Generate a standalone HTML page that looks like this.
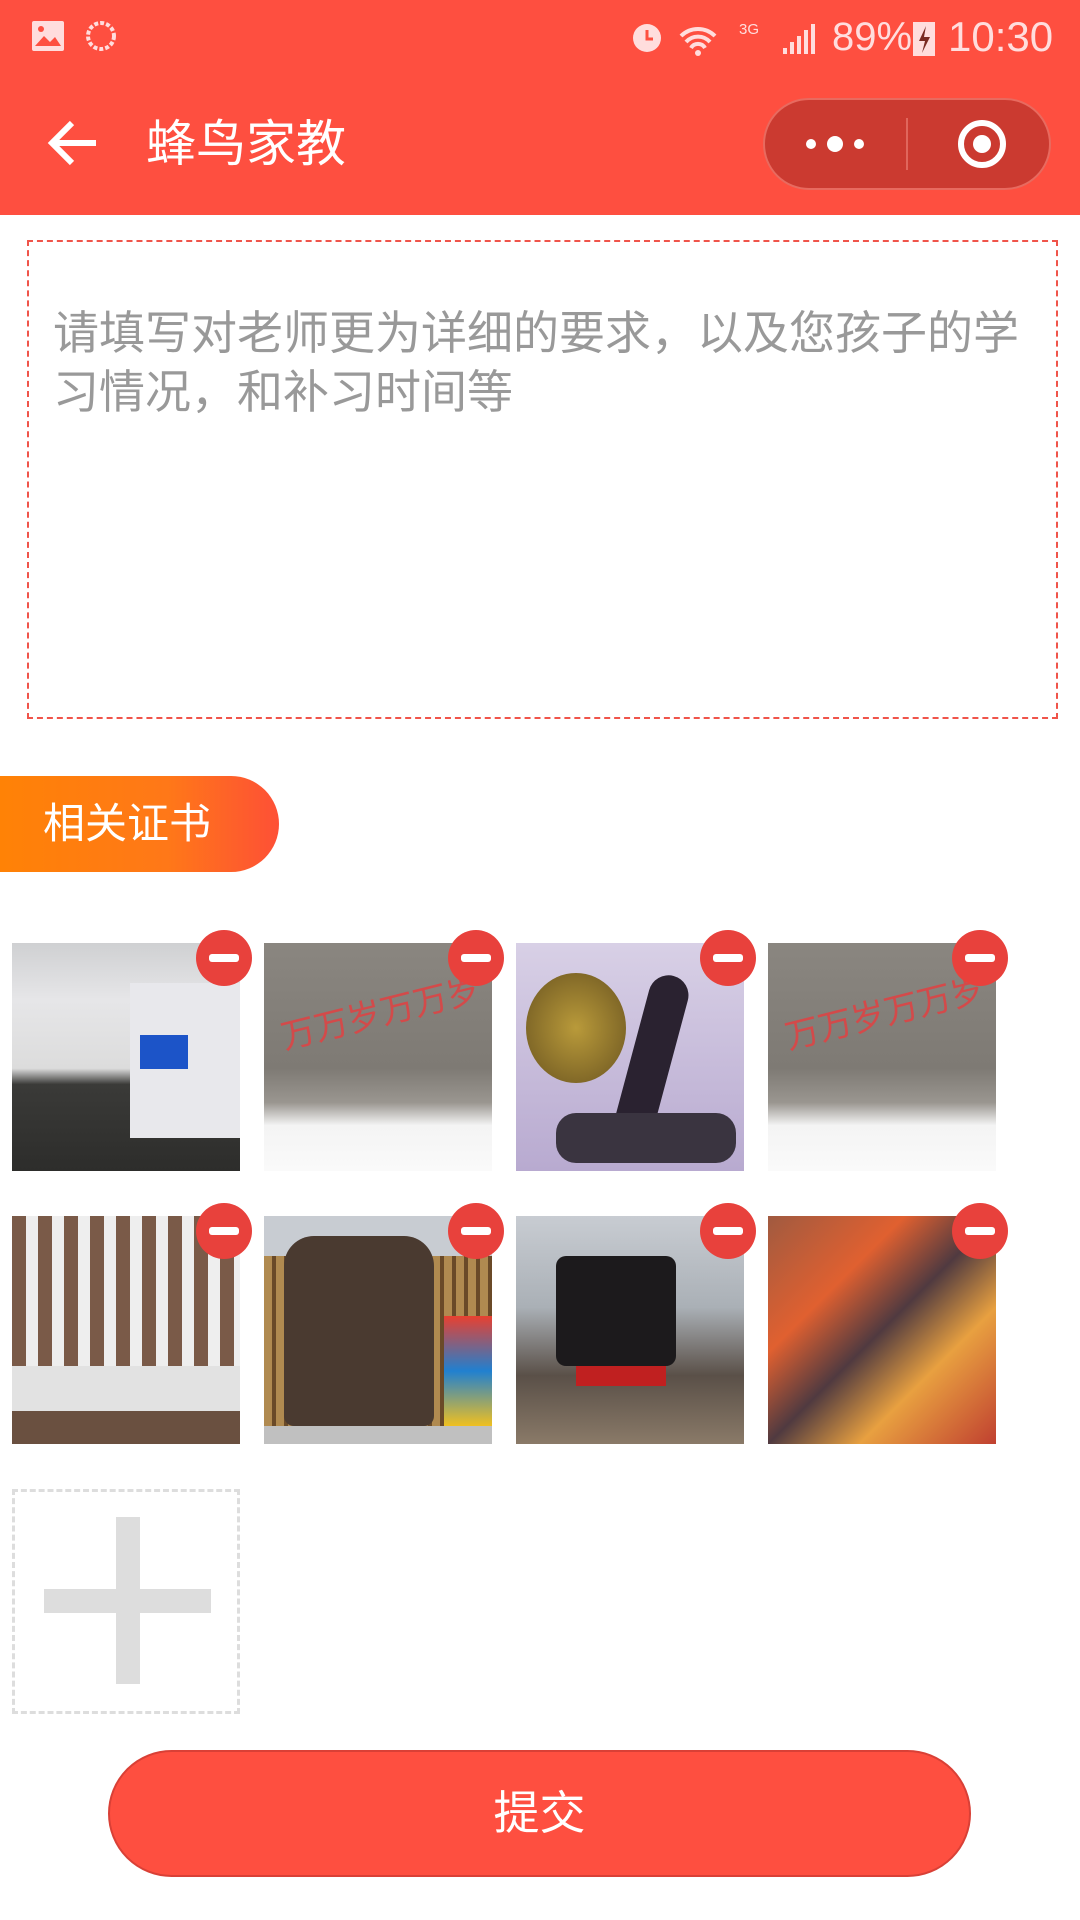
<!DOCTYPE html>
<html><head><meta charset="utf-8"><style>
*{margin:0;padding:0;box-sizing:border-box}
body{width:1080px;height:1920px;background:#fff;position:relative;overflow:hidden;font-family:"Liberation Sans","Noto Sans CJK SC",sans-serif}
.abs{position:absolute}
.hdr{left:0;top:0;width:1080px;height:215px;background:#fe4f40}
.img{position:absolute;width:228px;height:228px}
.min{position:absolute;width:56px;height:56px;border-radius:50%;background:#e8413c}
.min:after{content:"";position:absolute;left:13px;top:24px;width:30px;height:8px;background:#fff;border-radius:3px}
.cm{display:inline-block;width:1em}
</style></head><body>
<div class="abs hdr"></div>
<svg class="abs" style="left:30px;top:18px" width="100" height="40">
<rect x="2" y="3" width="32" height="30" rx="2" fill="#fdd"/><path d="M5 28 L14 18 L20 24 L25 19 L31 28Z" fill="#fe4f40"/><circle cx="11" cy="11" r="3" fill="#fe4f40"/>
<circle cx="71" cy="18" r="13" fill="none" stroke="#fdd" stroke-width="4" stroke-dasharray="4 2"/>
</svg>
<svg class="abs" style="left:625px;top:14px" width="200" height="46">
<circle cx="22" cy="24" r="14" fill="#fdd"/><path d="M22 16v9h6" stroke="#fe4f40" stroke-width="3" fill="none"/>
<path d="M56 22a24 24 0 0 1 34 0M61 28a16 16 0 0 1 24 0M66 34a8 8 0 0 1 14 0" stroke="#fdd" stroke-width="4" fill="none"/><circle cx="73" cy="39" r="3" fill="#fdd"/>
<text x="114" y="20" font-size="15" fill="#fdd" font-family="Liberation Sans">3G</text>
<path d="M158 40h4v-6h-4zM165 40h4v-12h-4zM172 40h4v-18h-4zM179 40h4v-24h-4zM186 40h4v-30h-4z" fill="#fdd"/>
</svg>
<div class="abs" style="left:832px;top:12px;font-size:40px;color:#fdd;line-height:50px">89%</div>
<svg class="abs" style="left:912px;top:18px" width="24" height="40"><rect x="1" y="4" width="22" height="34" fill="#fdd"/><path d="M14 8l-7 15h6l-3 12 8-16h-6z" fill="#7a2a22"/></svg>
<div class="abs" style="left:948px;top:12px;font-size:42px;color:#fdd;line-height:50px">10:30</div>
<svg class="abs" style="left:46px;top:118px" width="54" height="50"><path d="M50 25H6M26 5L6 25l20 20" stroke="#fff" stroke-width="6" fill="none"/></svg>
<div class="abs" style="left:146px;top:114px;font-size:50px;color:#fff;line-height:60px">蜂鸟家教</div>
<div class="abs" style="left:763px;top:98px;width:288px;height:92px;border-radius:46px;background:#cb3a30;border:2px solid #e86a5f"></div>
<div class="abs" style="left:906px;top:118px;width:2px;height:52px;background:#e0665c"></div>
<svg class="abs" style="left:800px;top:128px" width="70" height="32"><circle cx="11" cy="16" r="5" fill="#fff"/><circle cx="35" cy="16" r="8" fill="#fff"/><circle cx="59" cy="16" r="5" fill="#fff"/></svg>
<svg class="abs" style="left:955px;top:117px" width="54" height="54"><circle cx="27" cy="27" r="21" stroke="#fff" stroke-width="6" fill="none"/><circle cx="27" cy="27" r="9" fill="#fff"/></svg>
<div class="abs" style="left:27px;top:240px;width:1031px;height:479px;border:2px dashed #f0544a"></div>
<div class="abs" style="left:53px;top:304px;white-space:nowrap;font-size:46px;line-height:59px;color:#999">请填写对老师更为详细的要求<span class="cm">，</span>以及您孩子的学<br>习情况<span class="cm">，</span>和补习时间等</div>
<div class="abs" style="left:0;top:776px;width:279px;height:96px;border-radius:0 48px 48px 0;background:linear-gradient(90deg,#ff8206,#ff7818 60%,#fe5036)"></div>
<div class="abs" style="left:43px;top:796px;font-size:42px;line-height:56px;color:#fff">相关证书</div>
<div class="img" style="left:12px;top:943px;background:linear-gradient(180deg,#cfd0d2 0%,#e6e6e8 25%,#dcdcdc 55%,#3a3a38 62%,#2d2d2b 100%)"><div class="abs" style="left:118px;top:40px;width:110px;height:155px;background:#e8e8ec"></div><div class="abs" style="left:128px;top:92px;width:48px;height:34px;background:#1c54c8"></div></div>
<div class="img" style="left:264px;top:943px;background:linear-gradient(180deg,#8a8680 0%,#7e7a74 55%,#9a9690 70%,#f4f4f4 80%,#fafafa 100%)"><div class="abs" style="left:15px;top:50px;width:210px;height:40px;color:#d34a4a;font-size:34px;line-height:40px;transform:rotate(-14deg)">万万岁万万岁</div></div>
<div class="img" style="left:516px;top:943px;background:linear-gradient(180deg,#d8d0e6,#b8aad0 100%)"><div class="abs" style="left:10px;top:30px;width:100px;height:110px;border-radius:50%;background:radial-gradient(#b99a3a,#6a5420)"></div><div class="abs" style="left:115px;top:30px;width:40px;height:175px;background:#2a2230;border-radius:20px;transform:rotate(15deg)"></div><div class="abs" style="left:40px;top:170px;width:180px;height:50px;background:#3a3440;border-radius:20px"></div></div>
<div class="img" style="left:768px;top:943px;background:linear-gradient(180deg,#8a8680 0%,#7e7a74 55%,#9a9690 70%,#f4f4f4 80%,#fafafa 100%)"><div class="abs" style="left:15px;top:50px;width:210px;height:40px;color:#d34a4a;font-size:34px;line-height:40px;transform:rotate(-14deg)">万万岁万万岁</div></div>
<div class="img" style="left:12px;top:1216px;background:repeating-linear-gradient(90deg,#7a5a48 0 14px,#eeeeee 14px 26px)"><div class="abs" style="left:0;top:150px;width:228px;height:45px;background:#e2e2e2"></div><div class="abs" style="left:0;top:195px;width:228px;height:33px;background:#6a5040"></div></div>
<div class="img" style="left:264px;top:1216px;background:repeating-linear-gradient(90deg,#b08a50 0 8px,#6a4a28 8px 12px)"><div class="abs" style="left:0;top:0;width:228px;height:40px;background:#c8ccd2"></div><div class="abs" style="left:20px;top:20px;width:150px;height:190px;background:#4a3a30;border-radius:30px 30px 10px 10px"></div><div class="abs" style="left:180px;top:100px;width:48px;height:110px;background:linear-gradient(#e84030,#2080d0,#f0c020)"></div><div class="abs" style="left:0;top:210px;width:228px;height:18px;background:#c0c0c0"></div></div>
<div class="img" style="left:516px;top:1216px;background:linear-gradient(180deg,#c8ccd2 0%,#aab0b6 40%,#5a5048 70%,#8a7a68 100%)"><div class="abs" style="left:40px;top:40px;width:120px;height:110px;background:#1c1a1c;border-radius:10px"></div><div class="abs" style="left:60px;top:150px;width:90px;height:20px;background:#c02020"></div></div>
<div class="img" style="left:768px;top:1216px;background:linear-gradient(135deg,#a05a40,#e06030 30%,#503a40 50%,#e8a040 70%,#c04030 100%)"></div>
<div class="min" style="left:196px;top:930px"></div>
<div class="min" style="left:448px;top:930px"></div>
<div class="min" style="left:700px;top:930px"></div>
<div class="min" style="left:952px;top:930px"></div>
<div class="min" style="left:196px;top:1203px"></div>
<div class="min" style="left:448px;top:1203px"></div>
<div class="min" style="left:700px;top:1203px"></div>
<div class="min" style="left:952px;top:1203px"></div>
<div class="abs" style="left:12px;top:1489px;width:228px;height:225px;border:3px dashed #ddd"></div>
<div class="abs" style="left:44px;top:1589px;width:167px;height:24px;background:#ddd"></div>
<div class="abs" style="left:116px;top:1517px;width:24px;height:167px;background:#ddd"></div>
<div class="abs" style="left:108px;top:1750px;width:863px;height:127px;border-radius:64px;background:#fe4f40;border:2px solid #d94036;color:#fff;font-size:46px;text-align:center;line-height:123px">提交</div>
</body></html>
